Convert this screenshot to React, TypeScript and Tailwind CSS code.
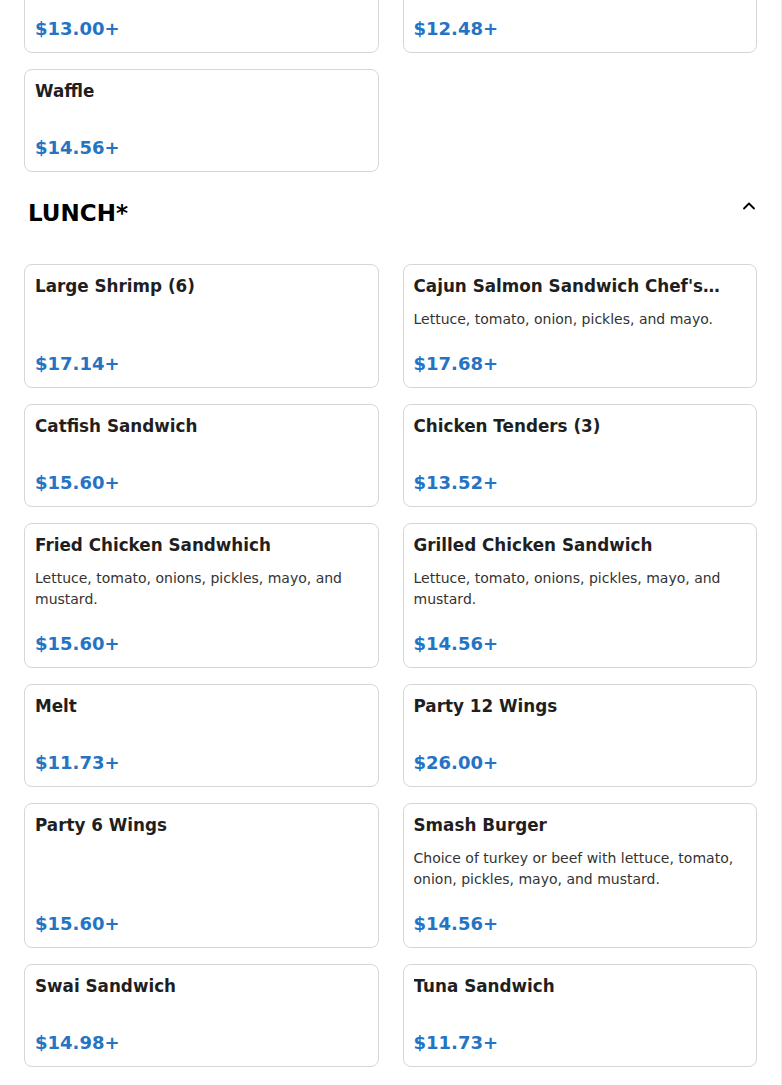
import React from "react";
import { ChevronUp } from "lucide-react";

type Item = { name: string; desc?: string; price: string };

const prevItems: Item[] = [
  { name: "Pancakes", price: "$13.00+" },
  { name: "French Toast", price: "$12.48+" },
  { name: "Waffle", price: "$14.56+" },
];

const lunch: Item[] = [
  { name: "Large Shrimp (6)", price: "$17.14+" },
  {
    name: "Cajun Salmon Sandwich Chef's Special",
    desc: "Lettuce, tomato, onion, pickles, and mayo.",
    price: "$17.68+",
  },
  { name: "Catfish Sandwich", price: "$15.60+" },
  { name: "Chicken Tenders (3)", price: "$13.52+" },
  {
    name: "Fried Chicken Sandwhich",
    desc: "Lettuce, tomato, onions, pickles, mayo, and mustard.",
    price: "$15.60+",
  },
  {
    name: "Grilled Chicken Sandwich",
    desc: "Lettuce, tomato, onions, pickles, mayo, and mustard.",
    price: "$14.56+",
  },
  { name: "Melt", price: "$11.73+" },
  { name: "Party 12 Wings", price: "$26.00+" },
  { name: "Party 6 Wings", price: "$15.60+" },
  {
    name: "Smash Burger",
    desc: "Choice of turkey or beef with lettuce, tomato, onion, pickles, mayo, and mustard.",
    price: "$14.56+",
  },
  { name: "Swai Sandwich", price: "$14.98+" },
  { name: "Tuna Sandwich", price: "$11.73+" },
];

function Card({ item }: { item: Item }) {
  return (
    <div className="flex flex-col rounded-lg border border-[#d6d6d6] bg-white p-2.5">
      <div className="mb-3 line-clamp-1 text-[16.8px] font-bold leading-[22px] text-[#1f1f1f]">
        {item.name}
      </div>
      <div className="mb-5 text-[14px] leading-[21px] text-[#333333]">
        {item.desc}
      </div>
      <div className="mt-auto text-[18px] font-bold leading-[27px] text-[#2574c4]">
        {item.price}
      </div>
    </div>
  );
}

export default function App() {
  return (
    <div
      className="min-h-screen overflow-hidden border-r border-[#ececec] bg-white px-6"
      style={{ fontFamily: '"DejaVu Sans", Verdana, sans-serif' }}
    >
      <div className="-mt-[50px]">
        <div className="grid grid-cols-2 gap-x-6 gap-y-4">
          {prevItems.map((it) => (
            <Card key={it.name} item={it} />
          ))}
        </div>
        <div className="flex items-start justify-between pl-1 pt-6">
          <h2 className="text-[23px] font-bold leading-[34px] text-black">LUNCH*</h2>
          <ChevronUp size={20} strokeWidth={2.2} className="-mr-0.5 text-black" />
        </div>
        <div className="mt-[34px] grid grid-cols-2 gap-x-6 gap-y-4 pb-6">
          {lunch.map((it) => (
            <Card key={it.name} item={it} />
          ))}
        </div>
      </div>
    </div>
  );
}
